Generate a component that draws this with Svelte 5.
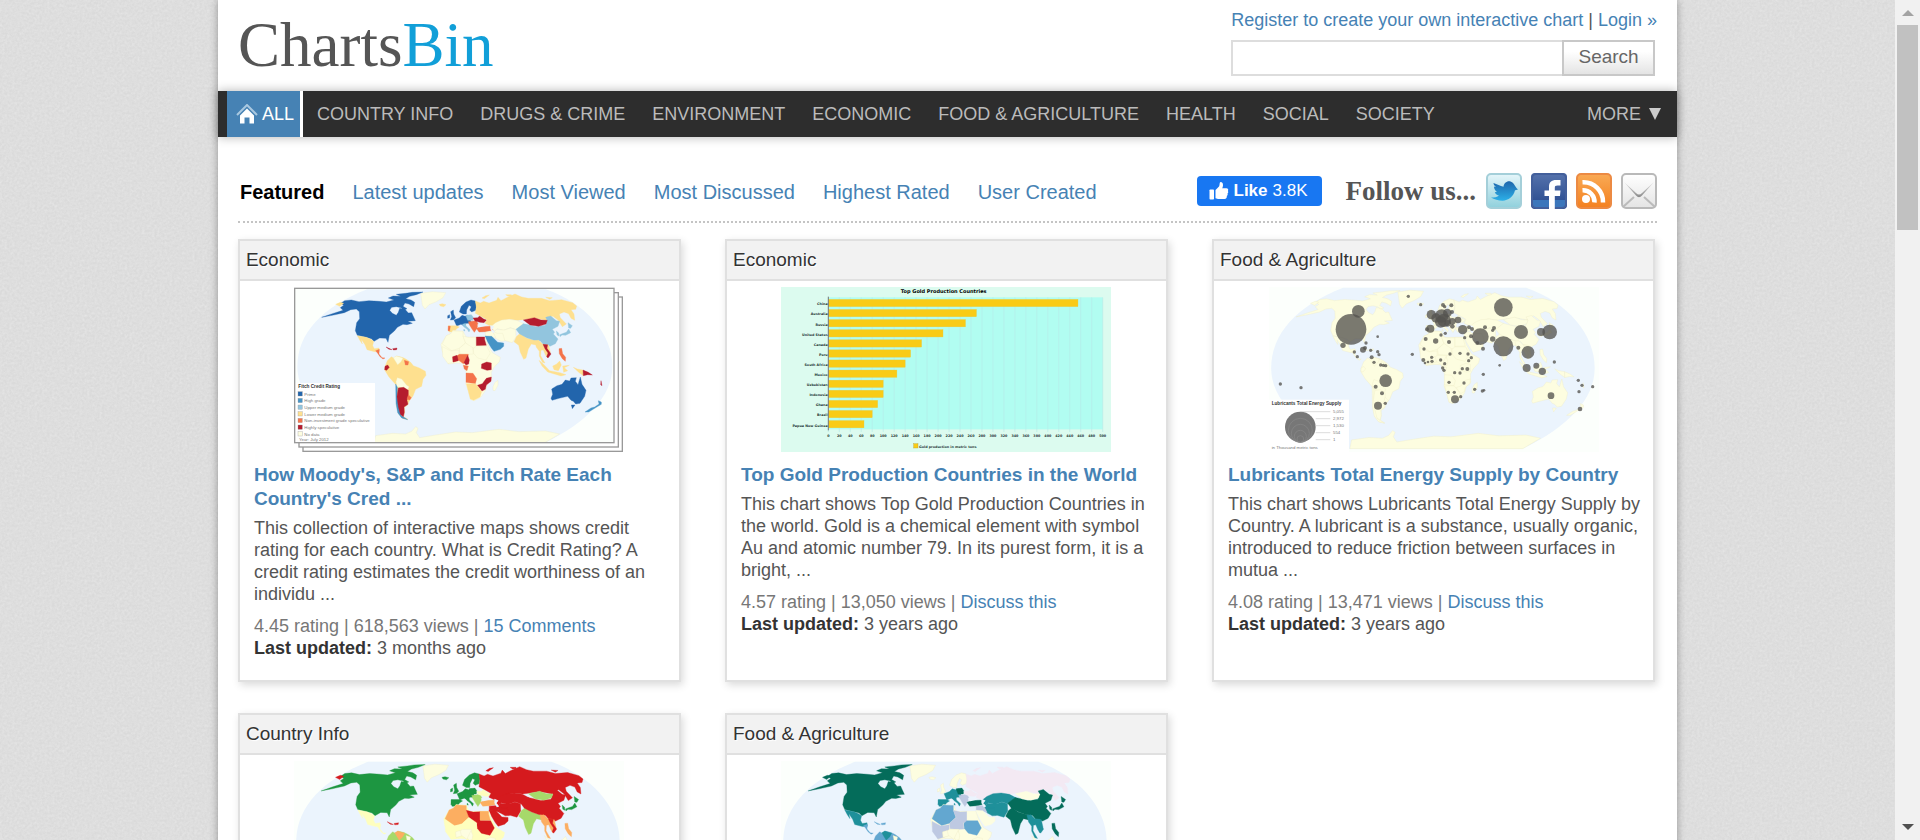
<script>
  const categories = [
    "COUNTRY INFO",
    "DRUGS & CRIME",
    "ENVIRONMENT",
    "ECONOMIC",
    "FOOD & AGRICULTURE",
    "HEALTH",
    "SOCIAL",
    "SOCIETY",
  ];

  const tabs = [
    "Featured",
    "Latest updates",
    "Most Viewed",
    "Most Discussed",
    "Highest Rated",
    "User Created",
  ];

  let activeTab = $state("Featured");
  let query = $state("");

  // world map outlines, later ones are painted over earlier ones
  const regions = {
    antarctica: "M285 522L290 497 340 490 380 492 398 484 410 470 417 475 412 488 422 503 470 495 530 486 580 488 660 478 720 485 800 483 842 492 790 522Z",
    greenland: "M425 70L460 65 500 68 492 83 472 95 450 104 438 117 430 106 428 90Z",
    namerica: "M185 100L197 92 217 90 240 95 270 92 300 94 322 96 345 90 328 84 342 78 365 79 352 73 380 70 400 67 432 66 412 74 392 79 380 86 396 90 407 97 404 110 390 102 378 99 372 109 384 116 376 120 366 113 352 110 338 112 332 121 340 130 352 136 358 127 362 115 378 118 388 129 398 128 409 152 386 154 400 160 384 164 372 163 355 172 346 183 331 196 327 217 321 205 302 204 285 214 277 206 262 202 235 196 229 182 233 158 242 146 241 125 232 117 215 119 196 128 160 136 128 142 160 131 192 121 184 113 194 106Z",
    alaska: "M170 103L184 97 194 100 182 109Z",
    mexico: "M235 197L262 202 275 208 284 214 281 227 286 236 300 234 301 244 287 245 264 239 258 224 247 208 250 222 242 210Z",
    camerica: "M290 242L301 238 300 252 309 263 318 264 312 267 303 260 296 250Z",
    cuba: "M321 231L330 235 339 239 330 238ZM341 236L354 234 353 239 343 240Z",
    samerica: "M318 290L325 272 337 260 345 265 352 258 370 262 382 268 395 277 403 287 421 294 439 304 441 316 432 328 428 349 410 358 402 378 392 391 386 405 376 412 377 426 374 440 387 448 372 446 359 432 352 405 354 348 330 321 317 300Z",
    venezuela: "M343 263L352 258 372 264 366 275 356 284 349 273Z",
    guyana: "M376 271L389 275 387 285 379 285Z",
    ecuador: "M318 289L326 285 331 292 323 301 317 299Z",
    bolivia: "M355 323L368 327 383 346 390 350 386 360 368 353 354 350 351 335Z",
    chile: "M350 342L355 352 355 380 360 410 366 436 386 449 368 444 356 428 351 400Z",
    argentina: "M358 354L374 352 388 361 388 374 384 391 387 403 375 411 376 427 373 440 364 433 358 410 354 380Z",
    uruguay: "M388 374L397 383 392 390 384 388Z",
    iceland: "M481 103L490 101 501 104 494 110 484 108Z",
    britain: "M515 125L523 120 524 132 530 143 524 149 514 150 518 140ZM506 137L512 134 512 143 506 145Z",
    weurope: "M525 150L541 144 549 136 559 139 566 136 577 142 574 153 581 160 562 160 556 168 546 163 533 168Z",
    iberia: "M508 167L533 167 541 171 532 177 526 186 510 186Z",
    portugal: "M508 168L514 169 512 182 507 182Z",
    scandinavia: "M541 126L547 109 561 96 576 90 589 93 592 106 590 121 578 126 572 120 577 110 570 106 563 120 562 132 552 132Z",
    ceurope: "M560 136L577 134 583 142 581 151 566 151Z",
    italy: "M550 163L560 160 561 168 573 179 570 186 565 178 554 170ZM555 177L558 183 554 182Z",
    balkans: "M568 155L592 152 597 161 594 175 586 187 579 177 571 164Z",
    ukraine: "M582 144L596 143 602 138 614 147 623 150 615 158 603 157 588 153Z",
    turkey: "M592 175L607 170 642 168 644 180 621 185 600 186Z",
    russia: "M589 93L604 99 614 94 630 99 653 91 657 82 666 92 681 84 708 72 728 81 748 85 787 85 812 92 848 89 881 98 893 108 890 118 876 119 885 132 887 151 876 145 869 131 855 126 841 132 844 143 862 162 850 170 838 151 822 139 806 142 803 151 766 144 733 149 716 151 690 148 664 155 655 166 639 170 618 160 624 149 603 137 589 130 592 112Z",
    arctic: "M609 84L620 77 631 75 616 86ZM680 74L697 74 698 78 687 79ZM800 82L820 83 812 88Z",
    kazakhstan: "M635 170L650 158 668 150 692 148 716 152 735 162 711 179 694 173 674 181 655 176 646 184Z",
    centralasia: "M652 178L676 180 694 174 710 179 711 200 700 218 682 213 660 207 642 190Z",
    iran: "M641 184L655 190 671 190 678 213 666 214 650 205Z",
    levant: "M619 186L641 184 651 205 643 202 632 200 619 199Z",
    saudi: "M618 198L638 199 650 211 656 217 674 219 674 229 664 238 645 244 637 234 626 216Z",
    india: "M705 215L713 199 724 190 741 203 760 209 776 212 770 225 757 222 748 237 741 264 734 268 724 247 719 226Z",
    china: "M711 178L733 161 743 163 770 170 799 166 805 152 800 142 815 138 832 152 842 154 837 169 820 178 827 187 823 192 837 207 829 221 813 229 792 223 784 213 764 210 743 203 721 191Z",
    mongolia: "M733 150L752 146 766 143 786 150 805 151 801 162 779 169 753 165Z",
    seasia: "M767 212L779 211 791 223 809 225 814 247 805 263 799 254 793 240 786 241 785 257 798 279 790 277 781 258 781 244 772 232Z",
    vietnam: "M792 223L806 224 804 235 816 252 807 264 803 260 807 249 798 236Z",
    philippines: "M840 236L848 235 851 251 860 262 859 274 850 266 841 251Z",
    japan: "M867 158L880 167 875 175 869 174ZM869 177L875 188 860 196 849 195 843 200 842 194 853 190 862 187ZM832 183L839 189 840 198 834 195Z",
    indonesia: "M780 271L792 281 812 302 843 308 861 314 846 318 806 306 789 288ZM821 288L832 283 842 273 847 285 838 302 825 299ZM851 288L871 286 856 293 866 302 854 307ZM883 292L895 297 912 300 913 317 899 307Z",
    papua: "M912 300L928 307 940 315 926 314 913 317ZM966 332L969 347 965 344Z",
    australia: "M818 357L834 347 849 343 859 330 872 333 876 324 892 323 889 334 897 344 904 321 909 343 921 361 917 379 903 400 890 402 883 394 876 391 866 379 840 385 819 391 816 385 821 373ZM877 405L888 405 880 416Z",
    nz: "M918 426L936 414 947 411 960 402 958 392 967 396 967 403 952 412 929 426Z",
    africa: "M489 242L486 223 502 197 514 192 522 181 552 184 562 202 578 201 618 201 625 221 640 248 664 262 661 275 645 292 637 307 638 332 625 343 620 361 606 381 586 392 575 389 569 365 560 341 565 316 556 292 551 280 533 279 508 282Z",
    algeria: "M502 197L514 192 522 183 552 184 552 198 559 218 541 235 518 242 490 222Z",
    libya: "M552 198L572 203 592 202 592 235 575 233 560 219Z",
    egypt: "M592 201L617 201 617 209 622 226 592 227Z",
    sudan: "M592 228L623 228 634 249 621 270 596 264 584 250 583 236Z",
    sahel: "M541 235L560 219 581 233 583 252 567 253 543 251Z",
    wafrica: "M490 230L516 243 540 240 540 263 526 275 507 281 491 259Z",
    nigeria: "M541 253L568 253 565 274 553 281 539 271 523 276 521 262 533 258Z",
    benin: "M521 260L534 256 538 272 522 276Z",
    cameroon: "M566 256L571 270 569 282 561 285 555 278Z",
    gabon: "M553 286L568 288 564 302 556 297Z",
    eafrica: "M608 282L623 276 637 279 637 299 624 301 607 295Z",
    angola: "M561 309L582 310 593 326 589 341 561 337Z",
    mozambique: "M622 325L637 321 636 334 622 345 619 358 609 363 595 346 610 341Z",
    safrica: "M562 341L589 341 598 351 608 365 603 381 584 391 574 387Z",
    madagascar: "M642 350L648 337 657 331 657 345 648 362 642 361Z",
    caspian: "M634 165L646 170 640 178 648 187 641 189 634 177Z",
    blacksea: "M594 164L610 162 622 167 602 172Z",
  };

  const LAND = "#fdfde0";
  const SEA = "#ebf4fd";

  const ratings = {
    "#2265ac": ["namerica", "britain", "weurope", "scandinavia", "australia"],
    "#4694c6": ["saudi", "nz", "chile"],
    "#92c5de": ["china", "ceurope", "italy", "japan"],
    "#fee08f": ["mexico", "samerica", "russia", "india", "indonesia", "iberia", "safrica", "seasia", "iceland", "alaska", "arctic"],
    "#f4734a": ["turkey", "nigeria", "angola", "guyana", "uruguay", "portugal", "philippines", "gabon", "camerica", "balkans"],
    "#b51c2e": ["argentina", "egypt", "mongolia", "ukraine", "benin", "cameroon", "eafrica", "mozambique", "ecuador", "vietnam", "cuba", "papua"],
  };
  const freedom = {
    "#1d9641": ["namerica", "britain", "weurope", "scandinavia", "ceurope", "iberia", "portugal", "italy", "iceland", "japan", "australia", "nz"],
    "#d51a1e": ["russia", "china", "saudi", "libya", "sudan", "iran", "kazakhstan", "centralasia", "cuba", "arctic", "alaska", "vietnam", "levant"],
    "#a6d96a": ["mongolia", "india", "balkans", "samerica"],
    "#fcae61": ["algeria", "egypt", "turkey", "seasia", "venezuela", "philippines"],
    "#fefebe": ["mexico", "camerica", "ukraine", "sahel", "wafrica", "africa"],
  };
  const farming = {
    "#046c5a": ["namerica", "china", "india", "turkey", "alaska", "japan", "philippines", "ceurope"],
    "#1f909a": ["mexico", "weurope", "iberia", "portugal", "kazakhstan", "centralasia", "iran", "venezuela", "italy", "seasia", "vietnam"],
    "#63a7d0": ["algeria", "samerica", "camerica", "cuba", "sudan"],
    "#bec9e2": ["sahel", "libya", "levant", "wafrica", "balkans"],
    "#f3e9f3": ["russia", "ukraine", "arctic"],
    "#fdfde1": ["mongolia", "egypt", "saudi"],
  };

  // { region: colour } from { colour: [regions] }
  function paint(groups) {
    const out = {};
    for (const [color, names] of Object.entries(groups)) {
      for (const name of names) out[name] = color;
    }
    return out;
  }

  const legend = [
    ["#2265ac", "Prime"],
    ["#4694c6", "High grade"],
    ["#92c5de", "Upper medium grade"],
    ["#fee08f", "Lower medium grade"],
    ["#f4734a", "Non-investment grade speculative"],
    ["#b51c2e", "Highly speculative"],
    ["#fdfde0", "No data"],
  ];

  // x, y, radius
  const bubbles = [
    [246, 127, 46], [268, 73, 19], [222, 175, 8], [350, 281, 19], [327, 356, 12], [349, 349, 5], [339, 319, 6], [320, 299, 6],
    [326, 149, 4], [291, 168, 5], [282, 188, 9], [288, 183, 6], [305, 190, 5], [326, 194, 5], [330, 203, 5], [308, 211, 6],
    [256, 195, 5], [265, 209, 5], [315, 226, 5], [335, 234, 5], [343, 235, 5], [350, 236, 5], [418, 28, 5], [455, 53, 5],
    [522, 54, 6], [527, 59, 5], [547, 55, 6], [487, 83, 14], [501, 93, 14], [518, 87, 20], [525, 100, 20], [515, 105, 17],
    [535, 78, 13], [549, 75, 6], [550, 103, 10], [567, 99, 10], [484, 125, 12], [474, 127, 6], [550, 118, 7], [536, 109, 10],
    [581, 128, 14], [600, 121, 6], [609, 126, 6], [634, 149, 25], [648, 121, 6], [675, 123, 6], [671, 130, 5], [671, 156, 8],
    [642, 185, 6], [625, 168, 6], [587, 152, 5], [606, 148, 6], [516, 144, 5], [529, 139, 5], [470, 156, 6], [500, 162, 8],
    [540, 165, 6], [465, 186, 5], [430, 202, 5], [463, 219, 6], [468, 228, 4], [477, 225, 4], [489, 223, 5], [488, 211, 5],
    [515, 219, 5], [527, 230, 5], [521, 243, 5], [525, 250, 5], [543, 201, 5], [573, 199, 5], [597, 201, 5], [607, 212, 5],
    [599, 221, 5], [580, 245, 5], [595, 246, 6], [557, 257, 5], [573, 258, 5], [540, 286, 5], [585, 288, 5], [538, 316, 5],
    [556, 316, 5], [558, 337, 12], [575, 329, 5], [617, 307, 5], [640, 312, 5], [645, 310, 4], [643, 262, 5], [692, 235, 4],
    [703, 61, 28], [756, 135, 21], [703, 178, 30], [816, 135, 12], [842, 135, 22], [748, 182, 6], [777, 196, 19], [773, 243, 12],
    [802, 236, 9], [820, 253, 11], [856, 225, 5], [846, 326, 10], [933, 366, 7], [928, 280, 5], [939, 295, 5], [971, 299, 5],
    [930, 314, 5], [34, 291, 5], [96, 302, 5],
  ];

  const gold = [
    ["China", 455],
    ["Australia", 270],
    ["Russia", 250],
    ["United States", 209],
    ["Canada", 170],
    ["Peru", 150],
    ["South Africa", 140],
    ["Mexico", 125],
    ["Uzbekistan", 100],
    ["Indonesia", 100],
    ["Ghana", 90],
    ["Brazil", 80],
    ["Papua New Guinea", 65],
  ];
  const ticks = Array.from({ length: 26 }, (_, i) => i * 20);
  const goldX = (v) => 142 + (v / 500) * 823;

  const cards = [
    {
      category: "Economic",
      kind: "stack",
      colors: paint(ratings),
      title: "How Moody's, S&P and Fitch Rate Each Country's Cred ...",
      text: "This collection of interactive maps shows credit rating for each country. What is Credit Rating? A credit rating estimates the credit worthiness of an individu ...",
      rating: "4.45",
      views: "618,563",
      discuss: "15 Comments",
      updated: "3 months ago",
    },
    {
      category: "Economic",
      kind: "bars",
      title: "Top Gold Production Countries in the World",
      text: "This chart shows Top Gold Production Countries in the world. Gold is a chemical element with symbol Au and atomic number 79. In its purest form, it is a bright, ...",
      rating: "4.57",
      views: "13,050",
      discuss: "Discuss this",
      updated: "3 years ago",
    },
    {
      category: "Food & Agriculture",
      kind: "bubbles",
      colors: {},
      title: "Lubricants Total Energy Supply by Country",
      text: "This chart shows Lubricants Total Energy Supply by Country. A lubricant is a substance, usually organic, introduced to reduce friction between surfaces in mutua ...",
      rating: "4.08",
      views: "13,471",
      discuss: "Discuss this",
      updated: "3 years ago",
    },
    { category: "Country Info", kind: "map", colors: paint(freedom) },
    { category: "Food & Agriculture", kind: "map", colors: paint(farming) },
  ];
</script>

{#snippet world(colors)}
  <path d="M265 58H800C920 100 1000 190 1000 290C1000 380 920 460 790 522H270C140 460 55 380 55 290C55 190 130 110 265 58Z" fill={SEA} />
  {#each Object.entries(regions) as [name, d]}
    {#if name === "caspian" || name === "blacksea"}
      <path {d} fill={SEA} />
    {:else}
      <path {d} fill={colors[name] ?? LAND} stroke={colors[name] ?? "#eceac4"} />
    {/if}
  {/each}
{/snippet}

{#snippet thumb(card)}
  <svg class="thumb" viewBox="0 0 990 495" role="img" aria-label={card.title ?? card.category}>
    {#if card.kind === "bars"}
      <rect width="990" height="495" fill="#dcfbef" />
      <rect x="142" y="31" width="823" height="396" fill="#b1fdf1" />
      {#each ticks as t}
        <path d="M{goldX(t)} 31V435" stroke="#b5ece8" stroke-width="2" />
        <text x={goldX(t)} y="451" class="tiny" text-anchor="middle">{t}</text>
      {/each}
      {#each gold as [name, tons], i}
        <rect x="142" y={37 + i * 30.3} width={goldX(tons) - 142} height="22" fill="#f9cb16" stroke="#e8c944" />
        <text x="140" y={55 + i * 30.3} class="tiny" text-anchor="end">{name}</text>
      {/each}
      <path d="M142 29V430" stroke="#777" stroke-width="3" />
      <text x="488" y="19" class="chart-title" text-anchor="middle">Top Gold Production Countries</text>
      <rect x="398" y="470" width="13" height="13" fill="#f9cb16" stroke="#b89a20" />
      <text x="414" y="482" class="tiny">Gold production in metric tons</text>
    {:else if card.kind === "stack"}
      <rect x="27" y="30" width="958" height="463" fill="#fff" stroke="#999" stroke-width="4" />
      <rect x="15" y="17" width="958" height="463" fill="#fff" stroke="#999" stroke-width="4" />
      <svg x="2" y="4" width="958" height="463" viewBox="2 4 958 463">
        <rect width="990" height="495" fill="#fcfffc" />
        <g transform="translate(-45 -51)">{@render world(card.colors)}</g>
        <rect y="288" width="243" height="200" fill="#fff" />
        <text x="13" y="302" class="legend-title">Fitch Credit Rating</text>
        {#each legend as [color, label], i}
          <rect x="12" y={314 + i * 20} width="13" height="13" fill={color} stroke="#999" />
          <text x="31" y={326 + i * 20} class="legend">{label}</text>
        {/each}
        <text x="15" y="463" class="legend">Year: July 2012</text>
      </svg>
      <rect x="2" y="4" width="958" height="463" fill="none" stroke="#999" stroke-width="4" />
    {:else}
      <rect width="990" height="495" fill="#fcfffc" />
      <g transform="matrix(1.027 0 0 1.04 -50 -58)">{@render world(card.colors)}</g>
      {#if card.kind === "bubbles"}
        {#each bubbles as [x, y, r]}
          <circle cx={x} cy={y} {r} fill="#55534f" fill-opacity="0.78" />
        {/each}
        <rect y="338" width="240" height="157" fill="#fff" />
        <text x="8" y="353" class="legend-title">Lubricants Total Energy Supply</text>
        <circle cx="94" cy="420" r="46" fill="#777" />
        {#each [36, 27, 18, 10] as r}
          <circle cx="94" cy={466 - r} {r} fill="none" stroke="#8a8a8a" stroke-width="2" />
        {/each}
        {#each ["5,055", "2,972", "1,530", "554", "1"] as label, i}
          <path d="M{i ? 140 : 94} {374 + i * 21}H184" stroke="#ccc" stroke-width="2" />
          <text x="192" y={379 + i * 21} class="legend">{label}</text>
        {/each}
        <text x="8" y="485" class="legend">in Thousand metric tons</text>
      {/if}
    {/if}
  </svg>
{/snippet}

<div class="shell">
  <svg class="paper" aria-hidden="true">
    <filter id="grain">
      <feTurbulence type="fractalNoise" baseFrequency="0.4" numOctaves="3" />
      <feColorMatrix values="0 0 0 0 1  0 0 0 0 1  0 0 0 0 1  0.3 0.3 0 0 -0.2" />
    </filter>
    <rect width="100%" height="100%" filter="url(#grain)" />
  </svg>

  <div class="scroll">
    <div class="page">
      <header>
        <a class="logo" href="#home">Charts<span>Bin</span></a>
        <div class="account">
          <p><a href="#register">Register to create your own interactive chart</a> | <a href="#login">Login »</a></p>
          <form onsubmit={(e) => e.preventDefault()}>
            <input type="text" aria-label="Search charts" bind:value={query} />
            <button type="submit">Search</button>
          </form>
        </div>
      </header>

      <nav>
        <a class="all" href="#all">
          <svg width="22" height="20" viewBox="0 0 22 20" aria-hidden="true">
            <path d="M1 11L11 1L21 11" fill="none" stroke="#a9c8e0" stroke-width="2" />
            <path d="M4 11.500L11 4.500L18 11.500V19.500H13.500V13.500H8.500V19.500H4Z" fill="#fff" />
          </svg>
          ALL
        </a>
        {#each categories as name}
          <a href="#{name.toLowerCase()}">{name}</a>
        {/each}
        <a class="more" href="#more">MORE <span class="arrow"></span></a>
      </nav>

      <main>
        <div class="toolbar">
          <div class="tabs">
            {#each tabs as tab}
              <a
                href="#{tab}"
                class:active={tab === activeTab}
                onclick={() => (activeTab = tab)}>{tab}</a>
            {/each}
          </div>
          <button class="like" type="button">
            <svg width="20" height="20" viewBox="0 0 20 20" fill="#fff" aria-hidden="true">
              <rect x="0.500" y="8.500" width="4.500" height="10" rx="0.800" />
              <path d="M6.500 9L10 5.500C10.600 4.600 10.500 3 10.800 1.800C11.100 0.500 14 0.800 14 4C14 5.500 13.500 6.500 13.200 7.300H17.500C19 7.300 19.800 8.800 18.900 10C19.500 10.900 19.300 12 18.500 12.600C18.900 13.500 18.600 14.600 17.800 15.100C18.100 16.600 17.300 18 15.500 18H10C8.500 18 7.800 17.400 6.500 17.200Z" />
            </svg>
            <b>Like</b> 3.8K
          </button>
          <span class="follow">Follow us...</span>
          <div class="social">
            <a href="#twitter" aria-label="Twitter">
              <svg viewBox="0 0 36 36">
                <linearGradient id="tw" x2="0" y2="1"><stop stop-color="#e6f6fa" /><stop offset="1" stop-color="#8fd0dc" /></linearGradient>
                <linearGradient id="bird" x2="0" y2="1"><stop stop-color="#1f66ac" /><stop offset="1" stop-color="#2cb0e8" /></linearGradient>
                <rect x="1" y="1" width="34" height="34" rx="4" fill="url(#tw)" stroke="#a4cfd9" stroke-width="2" />
                <path d="M7.500 10C11 11 14 13 17.500 13.800C18 10 21 7.600 24.500 8.500C26 8.900 27 9.800 28 11.200C29 12.500 30 15 32 16.400C30.500 16.900 29.800 17 29 17.300C27.600 23.500 22.500 27.500 16.500 27.700C12.500 27.700 8 26.500 5 24.500C8.500 24.500 11 24 13 22.700C10.500 22 9.300 20.700 8.800 19C9.600 19.200 10.300 19.200 11 19C8.800 17.300 8 15.500 8 13.500C8.600 13.800 9.300 14 10 14C8.300 12.700 7.500 11.500 7.500 10Z" fill="url(#bird)" />
              </svg>
            </a>
            <a href="#facebook" aria-label="Facebook">
              <svg viewBox="0 0 36 36">
                <linearGradient id="fb" x2="0" y2="1"><stop stop-color="#5673ac" /><stop offset="1" stop-color="#25478c" /></linearGradient>
                <rect width="36" height="36" rx="4" fill="url(#fb)" />
                <path d="M1 27H35V32A3 3 0 0 1 32 35H4A3 3 0 0 1 1 32Z" fill="#3b76bb" />
                <rect x="1" y="1" width="34" height="34" rx="4" fill="none" stroke="#435f9b" stroke-width="2" />
                <path d="M18 36V23H13.500V17.500H18V14C18 9 20.500 7 25 7H29.500V12.500H26.500C24.300 12.500 23.800 13.200 23.800 15V17.500H29.500L29 23H23.800V36Z" fill="#fff" />
              </svg>
            </a>
            <a href="#rss" aria-label="RSS">
              <svg viewBox="0 0 36 36">
                <linearGradient id="rss" x2="0" y2="1"><stop stop-color="#f9aa55" /><stop offset="1" stop-color="#f4801f" /></linearGradient>
                <rect x="1" y="1" width="34" height="34" rx="4" fill="url(#rss)" stroke="#ec8a43" stroke-width="2" />
                <circle cx="10" cy="26" r="4" fill="#fff" />
                <path d="M6.500 17.300A11.500 11.500 0 0 1 18.500 29.500M6.500 9.300A19.500 19.500 0 0 1 27 29.500" fill="none" stroke="#fff" stroke-width="4.500" />
              </svg>
            </a>
            <a href="#mail" aria-label="E-mail">
              <svg viewBox="0 0 36 36">
                <linearGradient id="mail" x2="0" y2="1"><stop stop-color="#fff" /><stop offset="1" stop-color="#e4e4e4" /></linearGradient>
                <linearGradient id="flap" x2="0" y2="1"><stop stop-color="#e3e3e3" /><stop offset="1" stop-color="#888" /></linearGradient>
                <rect x="1" y="1" width="34" height="34" rx="4" fill="url(#mail)" stroke="#b9b9b9" stroke-width="2" />
                <path d="M3 9L15 20Q18 23 21 20L33 9L21 22.500Q18 26 15 22.500Z" fill="url(#flap)" />
                <path d="M2 34L13 24M34 34L23 24" stroke="#bbb" stroke-width="2" />
              </svg>
            </a>
          </div>
        </div>

        <div class="cards">
          {#each cards as card}
            <article>
              <h2>{card.category}</h2>
              {@render thumb(card)}
              {#if card.title}
                <div class="info">
                  <h3><a href="#chart">{card.title}</a></h3>
                  <p>{card.text}</p>
                  <p class="meta">
                    {card.rating} rating | {card.views} views | <a href="#discuss">{card.discuss}</a><br />
                    <span><b>Last updated:</b> {card.updated}</span>
                  </p>
                </div>
              {/if}
            </article>
          {/each}
        </div>
      </main>
    </div>
  </div>

  <div class="scrollbar" aria-hidden="true">
    <i class="up"></i>
    <div class="track"><div class="handle"></div></div>
    <i class="down"></i>
  </div>
</div>

<style>
  .shell {
    position: relative;
    display: flex;
    height: 100vh;
    overflow: hidden;
    background: #dadada;
    color: #555;
    font: 18px/22px "Liberation Sans", Arial, sans-serif;
  }
  .paper {
    position: absolute;
    inset: 0;
    width: 100%;
    height: 100%;
  }
  .scroll {
    position: relative;
    flex: 1;
    overflow-y: auto;
    scrollbar-width: none;
  }
  .page {
    width: 77%;
    min-width: 1440px;
    margin: 0 auto;
    background: #fff;
    box-shadow: 0 0 8px rgba(0, 0, 0, 0.35);
  }
  a {
    color: #4682b4;
    text-decoration: none;
  }
  p {
    margin: 0;
  }
  header {
    display: flex;
    justify-content: space-between;
    padding: 9px 20px 15px;
  }
  .logo {
    height: 67px;
    color: #555;
    font: 63px/73px "Liberation Serif", serif;
  }
  .logo span {
    color: #119fd8;
  }
  .account {
    display: flex;
    flex-direction: column;
    gap: 9px;
  }
  form {
    display: flex;
    margin-right: 2px;
  }
  input {
    flex: 1;
    min-width: 0;
    height: 36px;
    box-sizing: border-box;
    border: 2px solid #ddd;
    border-right: 0;
    background: #fff;
    font: inherit;
  }
  form button {
    width: 93px;
    height: 36px;
    padding: 0 0 3px;
    border: 2px solid #c8c8c8;
    background: linear-gradient(#fff 30%, #e4e4e4);
    color: #666;
    font: 19px/22px "Liberation Sans", Arial, sans-serif;
  }
  nav {
    display: flex;
    gap: 1px;
    height: 46px;
    background: #2d2d2d;
    box-shadow: 0 0 10px rgba(0, 0, 0, 0.3);
  }
  nav a {
    padding: 0 13px;
    color: #bbb;
    line-height: 46px;
  }
  nav .all {
    display: flex;
    align-items: center;
    gap: 4px;
    margin-left: 9px;
    padding: 0 6px 0 9px;
    border-right: 3px solid #fff;
    background: #4682b4;
    color: #fff;
    line-height: 48px;
  }
  nav .more {
    display: flex;
    align-items: center;
    gap: 8px;
    margin-left: auto;
    padding-right: 16px;
  }
  .arrow {
    border: 6px solid transparent;
    border-top: 12px solid #ccc;
    border-bottom: 0;
  }
  main {
    padding: 36px 20px;
  }
  .toolbar {
    display: flex;
    align-items: center;
    padding-bottom: 12px;
    border-bottom: 2px dotted #c4c4c4;
  }
  .tabs {
    display: flex;
    flex: 1;
    gap: 28px;
    padding: 2px 0 0 2px;
    font-size: 20px;
  }
  .tabs .active {
    color: #000;
    font-weight: bold;
  }
  .like {
    display: flex;
    align-items: center;
    gap: 5px;
    height: 30px;
    margin-right: 24px;
    padding: 0 14px 0 12px;
    border: 0;
    border-radius: 4px;
    background: #1877f2;
    color: #fff;
    font: 17px/20px "Liberation Sans", Arial, sans-serif;
  }
  .follow {
    margin-right: 10px;
    font: bold 27px/30px "Liberation Serif", serif;
  }
  .social {
    display: flex;
    gap: 9px;
  }
  .social a,
  .social svg {
    display: block;
    width: 36px;
    height: 36px;
  }
  .cards {
    display: grid;
    grid-template-columns: repeat(3, 1fr);
    gap: 31px 44px;
    margin: 16px 2px 0 0;
  }
  article {
    border: 2px solid #e0e0e0;
    box-shadow: 2px 3px 8px rgba(0, 0, 0, 0.15);
  }
  h2 {
    margin: 0;
    padding: 0 6px;
    border-bottom: 2px solid #e0e0e0;
    background: #f2f2f2;
    color: #333;
    font-size: 19px;
    font-weight: normal;
    line-height: 38px;
    text-shadow: 1px 1px 1px #fff;
  }
  .thumb {
    display: block;
    width: 330px;
    height: 165px;
    margin: 6px auto 0;
  }
  .info {
    padding: 11px 6px 21px 14px;
  }
  h3 {
    margin: 0 0 6px;
    font-size: 19px;
    line-height: 24px;
  }
  .meta {
    margin-top: 10px;
    color: #777;
  }
  .meta span {
    color: #555;
  }
  .meta b {
    color: #333;
  }
  .tiny {
    font: bold 10px "DejaVu Sans", sans-serif;
    fill: #233;
  }
  .chart-title {
    font: bold 15px "DejaVu Sans", sans-serif;
    fill: #000;
  }
  .legend {
    font: 13px "Liberation Sans", sans-serif;
    fill: #777;
  }
  .legend-title {
    font: bold 14px "Liberation Sans", sans-serif;
    fill: #333;
  }
  .scrollbar {
    position: relative;
    display: flex;
    flex-direction: column;
    align-items: center;
    width: 25px;
    padding: 10px 0;
    box-sizing: border-box;
    background: #f1f1f1;
  }
  .track {
    flex: 1;
    align-self: stretch;
    padding: 9px 2px;
  }
  .handle {
    height: 26%;
    background: #c1c1c1;
  }
  .up,
  .down {
    border: 6px solid transparent;
  }
  .up {
    border-top: 0;
    border-bottom-color: #a3a3a3;
  }
  .down {
    border-bottom: 0;
    border-top-color: #505050;
  }
</style>
